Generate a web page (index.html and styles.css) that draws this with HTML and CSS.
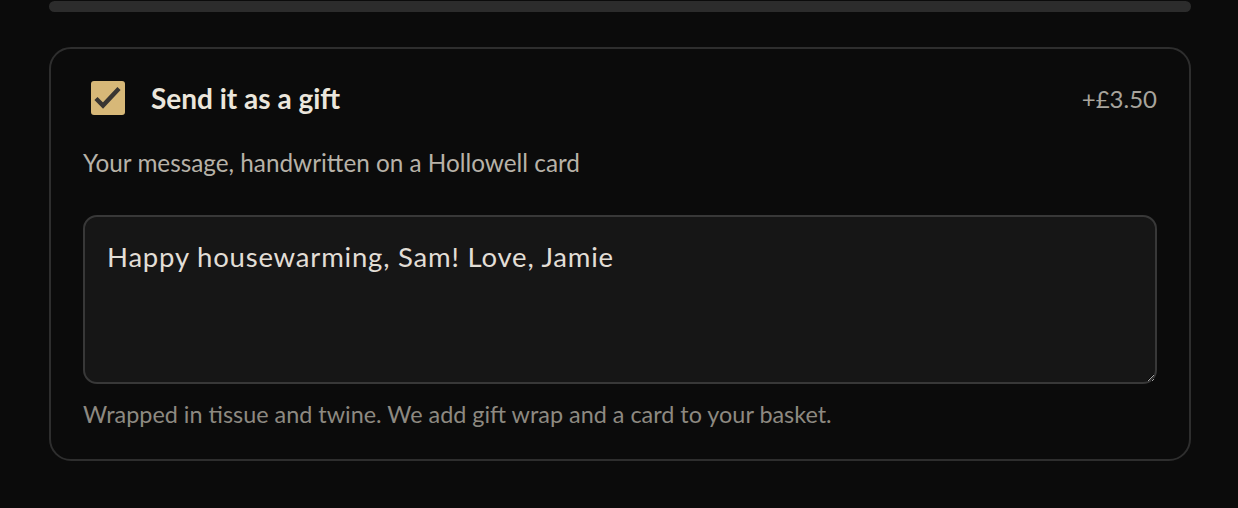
FILE: index.html
```html
<!DOCTYPE html>
<html lang="en">
<head>
<meta charset="utf-8">
<title>Gift option</title>
<link rel="stylesheet" href="styles.css">
</head>
<body>
<div class="page">
  <div class="bar"></div>
  <section class="card">
    <div class="head">
      <label class="check-label">
        <span class="checkbox" aria-checked="true" role="checkbox">
          <svg viewBox="0 0 34 34" width="34" height="34" aria-hidden="true">
            <path d="M6.5 19 L12 24.5 L26.5 9" fill="none" stroke="#3a3632" stroke-width="4.4" stroke-linecap="square" stroke-linejoin="miter"/>
          </svg>
        </span>
        <span class="title">Send it as a gift</span>
      </label>
      <span class="price">+£3.50</span>
    </div>
    <p class="sub">Your message, handwritten on a Hollowell card</p>
    <textarea class="msg">Happy housewarming, Sam! Love, Jamie</textarea>
    <p class="note">Wrapped in tissue and twine. We add gift wrap and a card to your basket.</p>
  </section>
</div>
</body>
</html>
```

FILE: styles.css
```css
html, body {
  margin: 0;
  padding: 0;
  background: #0b0b0b;
}
body {
  font-family: Lato, "Open Sans", sans-serif;
}
.page {
  padding: 0 47px 0 49px;
  display: flex;
  flex-direction: column;
}
.bar {
  height: 11px;
  margin-top: 1px;
  background: #2c2c2c;
  border-radius: 6px;
}
.card {
  margin-top: 35px;
  border: 2px solid #2e2e2e;
  border-radius: 22px;
  padding: 32px 32px 31px 32px;
  display: flex;
  flex-direction: column;
}
.head {
  display: flex;
  align-items: center;
  justify-content: space-between;
  height: 34px;
}
.check-label {
  display: flex;
  align-items: center;
  gap: 26px;
  padding-left: 8px;
}
.checkbox {
  width: 34px;
  height: 34px;
  background: #d7b878;
  border-radius: 3px;
  display: block;
}
.checkbox svg {
  display: block;
}
.title {
  font-size: 28px;
  font-weight: 700;
  color: #ebe6dc;
}
.price {
  font-size: 24px;
  color: #a8a49c;
}
.sub {
  margin: 33px 0 0;
  font-size: 24.3px;
  line-height: 30px;
  color: #b7b2a8;
}
.msg {
  margin-top: 37px;
  height: 169px;
  box-sizing: border-box;
  background: #161616;
  border: 2px solid #383838;
  border-radius: 14px;
  padding: 24px 22px;
  font-family: Lato, "Open Sans", sans-serif;
  font-size: 27.5px;
  letter-spacing: 0.8px;
  line-height: 32px;
  color: #e2ded6;
  color-scheme: dark;
  resize: vertical;
  outline: none;
  display: block;
  width: 100%;
}
.note {
  margin: 16px 0 0;
  font-size: 23.4px;
  line-height: 28px;
  color: #8d8981;
}
```
